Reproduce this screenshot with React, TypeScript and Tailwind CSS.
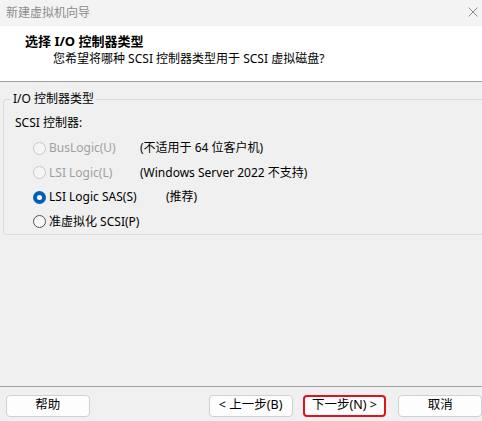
import React, { useState } from 'react';

const font = { fontFamily: '"Noto Sans", "Noto Sans CJK SC", sans-serif' };

type Opt = { id: string; label: string; note?: string; noteCls?: string; disabled?: boolean };

const options: Opt[] = [
  { id: 'bus', label: 'BusLogic(U)', note: '(不适用于 64 位客户机)', noteCls: 'left-[107px]', disabled: true },
  { id: 'lsi', label: 'LSI Logic(L)', note: '(Windows Server 2022 不支持)', noteCls: 'left-[107px]', disabled: true },
  { id: 'sas', label: 'LSI Logic SAS(S)', note: '(推荐)', noteCls: 'left-[133px]' },
  { id: 'pv', label: '准虚拟化 SCSI(P)' },
];

function Radio({ checked, disabled }: { checked: boolean; disabled?: boolean }) {
  if (checked) {
    return (
      <span className="w-[13px] h-[13px] rounded-full bg-[#005fb8] flex items-center justify-center shrink-0">
        <span className="w-[5px] h-[5px] rounded-full bg-white" />
      </span>
    );
  }
  return (
    <span
      className={`w-[13px] h-[13px] rounded-full border shrink-0 ${
        disabled ? 'border-[#c8c8c8] bg-[#f5f5f5]' : 'border-[#555] bg-[#f8f8f8]'
      }`}
    />
  );
}

function Btn({ children, focus, className = '' }: { children: React.ReactNode; focus?: boolean; className?: string }) {
  return (
    <button
      className={`h-[22px] w-[85px] rounded-[4px] bg-[#fdfdfd] text-[12.5px] text-black flex items-center justify-center ${
        focus ? 'border-2 border-[#e0141e]' : 'border border-[#d0d0d0]'
      } ${className}`}
    >
      {children}
    </button>
  );
}

export default function App() {
  const [sel, setSel] = useState('sas');

  return (
    <div className="w-[482px] h-[421px] bg-[#f0f0f0] flex flex-col overflow-hidden select-none" style={font}>
      {/* title bar */}
      <div className="h-[26px] bg-[#f3f3f3] flex items-center justify-between pl-[6px] pr-[4px]">
        <span className="text-[12px] text-[#8c8c8c]">新建虚拟机向导</span>
        <svg width="10" height="10" viewBox="0 0 10 10" className="mb-[2px]">
          <path d="M0.5 0.5 L9.5 9.5 M9.5 0.5 L0.5 9.5" stroke="#8c8c8c" strokeWidth="1" />
        </svg>
      </div>

      {/* header */}
      <div className="h-[56px] bg-white border-b border-[#a0a0a0] flex flex-col">
        <div className="pl-[25px] pt-[6px] text-[13px] font-bold text-black leading-[18px]">选择 I/O 控制器类型</div>
        <div className="pl-[53px] pt-[1px] text-[12px] text-black leading-[16px]">您希望将哪种 SCSI 控制器类型用于 SCSI 虚拟磁盘?</div>
      </div>

      {/* body */}
      <div className="flex-1 flex flex-col">
        <fieldset className="ml-[3px] mr-[-4px] mt-[9px] h-[144px] border border-[#dcdcdc] rounded-[3px]">
          <legend className="ml-[7px] px-[2px] text-[12px] text-black leading-[16px]">I/O 控制器类型</legend>
          <div className="pl-[11px]">
            <div className="mt-[8px] text-[12px] text-black leading-[16px]">SCSI 控制器:</div>
            <div className="mt-[9px] flex flex-col gap-[8.6px] pl-[18px]">
              {options.map((o) => (
                <div
                  key={o.id}
                  className="relative flex items-center h-[16px] text-[12px] leading-[16px]"
                  onClick={() => !o.disabled && setSel(o.id)}
                >
                  <Radio checked={sel === o.id} disabled={o.disabled} />
                  <span className={`ml-[3px] ${o.disabled ? 'text-[#a0a0a0]' : 'text-black'}`}>{o.label}</span>
                  {o.note && <span className={`absolute top-0 text-black ${o.noteCls}`}>{o.note}</span>}
                </div>
              ))}
            </div>
          </div>
        </fieldset>
      </div>

      {/* footer */}
      <div className="border-t border-[#a0a0a0] h-[35px] flex items-center pl-[6px] pt-[3px]">
        <Btn>帮助</Btn>
        <Btn className="ml-[119px]">&lt; 上一步(B)</Btn>
        <Btn focus className="ml-[10px]">下一步(N) &gt;</Btn>
        <Btn className="ml-[12px]">取消</Btn>
      </div>
    </div>
  );
}
